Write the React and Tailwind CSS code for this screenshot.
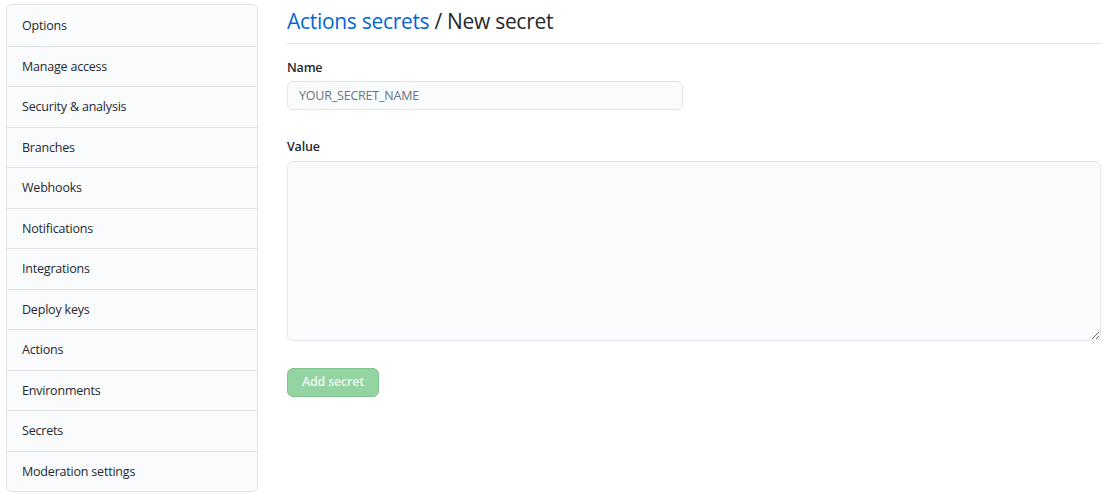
import React from 'react';

const menu = [
  'Options',
  'Manage access',
  'Security & analysis',
  'Branches',
  'Webhooks',
  'Notifications',
  'Integrations',
  'Deploy keys',
  'Actions',
  'Environments',
  'Secrets',
  'Moderation settings',
];

function App() {
  return (
    <div
      className="w-[1110px] h-[497px] bg-white flex text-[#24292e]"
      style={{ fontFamily: '"Segoe UI", "Open Sans", "Liberation Sans", sans-serif' }}
    >
      {/* sidebar */}
      <div className="pl-[6px] pt-[4px] w-[258px] shrink-0">
        <nav className="border border-[#e1e4e8] rounded-md bg-[#fafbfc] overflow-hidden">
          {menu.map((item, i) => (
            <div
              key={item}
              className={
                'h-[40.5px] flex items-center px-[15px] pt-[2px] text-[12.5px] tracking-[-0.2px] ' +
                (i > 0 ? 'border-t border-[#e1e4e8]' : '')
              }
            >
              {item}
            </div>
          ))}
        </nav>
      </div>

      {/* main */}
      <main className="flex-1 pl-[29px] pr-[9px]">
        <div className="h-[44px] border-b border-[#e1e4e8] flex items-center">
          <h2 className="text-[21px] tracking-[-0.3px] leading-none font-normal">
            <span className="text-[#0366d6]">Actions secrets</span> / New secret
          </h2>
        </div>

        <div className="mt-[15px] text-[12.5px] tracking-[-0.2px] font-semibold">Name</div>
        <input
          placeholder="YOUR_SECRET_NAME"
          className="mt-[3px] w-[396px] h-[29px] px-[11px] text-[12.5px] tracking-[-0.2px] bg-[#fafbfc] border border-[#e1e4e8] rounded-md outline-none placeholder:text-[#6a737d]"
        />

        <div className="mt-[28px] text-[12.5px] tracking-[-0.2px] font-semibold">Value</div>
        <textarea className="mt-[4px] w-full h-[180px] block bg-[#fafbfc] border border-[#e1e4e8] rounded-md outline-none" />

        <button className="mt-[27px] h-[29px] w-[92px] bg-[#94d3a2] border border-[#7fc48f] rounded-md text-[12.5px] tracking-[-0.2px] font-semibold text-[#f0f8f2]">
          Add secret
        </button>
      </main>
    </div>
  );
}

export default App;
